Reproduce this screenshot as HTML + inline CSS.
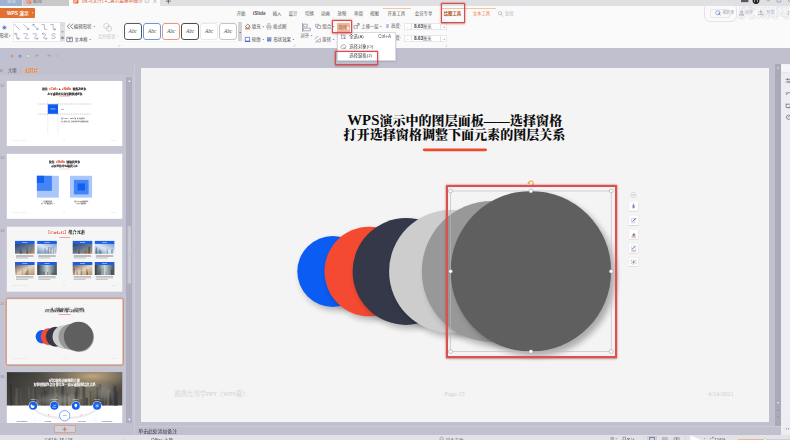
<!DOCTYPE html>
<html lang="zh-CN">
<head>
<meta charset="utf-8">
<title>WPS演示 - 选择窗格</title>
<style>
*{box-sizing:border-box;margin:0;padding:0}
html,body{width:790px;height:440px;overflow:hidden}
body{position:relative;filter:blur(0.3px);background:#c0c0cf;font-family:"Liberation Sans","Noto Sans CJK SC",sans-serif;color:#444;font-size:4.5px;line-height:1}
.abs{position:absolute}
.t{position:absolute;white-space:nowrap;line-height:1}
.serif{font-family:"Liberation Serif","Noto Serif CJK SC",serif}
/* top tab bar */
#tabbar{left:0;top:0;width:790px;height:5.7px;background:#e0e0e2}
#tab-home{left:0;top:0;width:21.5px;height:5.7px;background:#9fb2d0}
#tab-dk{left:23px;top:0;width:45.5px;height:5.7px;background:#c9c9cb}
#tab-act{left:69px;top:0;width:91px;height:5.7px;background:#fafafa}
/* ribbon */
#ribbon{left:0;top:5.7px;width:790px;height:42.6px;background:#fafafa}
#wpsbtn{left:0;top:7.6px;width:35px;height:10.6px;background:#e0712e;border-radius:0 1px 1px 0}
.menu{top:11.6px;font-size:4.4px;color:#4a4a4a}
.rb{font-size:4.4px;color:#3c3c3c}
.gal{background:#fff;border:0.5px solid #ebebee}
.sty{position:absolute;top:23.4px;width:17.6px;height:16.4px;border-radius:3px;background:#fff;border:0.8px solid #555}
.sty span{position:absolute;left:0;right:0;top:5px;text-align:center;font-family:"Liberation Serif",serif;font-style:italic;font-size:5.4px;color:#555}
.inp{position:absolute;left:403.5px;width:43.5px;height:7px;background:#fff;border:0.5px solid #e8e8ec}
/* panels */
#qat{left:0;top:48.3px;width:790px;height:15px}
#lpanel{left:0;top:75.4px;width:134.2px;height:347.6px;background:#c4c4d3}
.thumb{position:absolute;left:7px;width:115.4px;height:64.8px;background:#fff;overflow:hidden}
.num{position:absolute;left:0;font-size:4px;color:#8a8a98}
#vscroll{left:126.3px;top:76.8px;width:6.2px;height:346.2px;background:#aeaebf}
#slide{left:141px;top:68px;width:628px;height:353.5px;background:#f4f4f4}
#rscroll{left:775.2px;top:64px;width:6px;height:361.6px;background:#a9a9ba}
#rside{left:781.3px;top:64px;width:8.7px;height:371px;background:#eeeef2}
#status{left:0;top:435px;width:790px;height:5px;background:#e3e3e7}
.redbox{position:absolute;border:1.7px solid #dc4a4a;border-radius:.5px;box-shadow:0 0 1.2px rgba(200,50,50,.9),0 .6px 2.2px rgba(130,20,20,.4),inset 0 0 .8px rgba(200,50,50,.7)}
</style>
</head>
<body>
<!-- ===== window tab bar ===== -->
<div id="tabbar" class="abs"></div>
<div id="tab-home" class="abs"><span class="t" style="left:7px;top:-1.2px;font-size:4.4px;color:#e8eef8">首页</span></div>
<div id="tab-dk" class="abs"><span class="t" style="left:10px;top:-1.2px;font-size:4.4px;color:#555">稻壳</span></div>
<div id="tab-act" class="abs"><span class="t" style="left:13px;top:-1.5px;font-size:4.7px;color:#d9552b">[练习文件] 2_演示篇基本操作</span></div>
<!-- ===== ribbon ===== -->
<div id="ribbon" class="abs"></div>
<div id="wpsbtn" class="abs"><span class="t" style="left:7px;top:4.3px;font-size:4.8px;font-weight:bold;color:#fff">WPS 演示</span></div>
<span class="t" style="left:236.7px;top:12.20px;font-size:4.4px;color:#555;">开始</span>
<span class="t" style="left:252.8px;top:12.20px;font-size:4.4px;color:#555;"><b style="font-size:4.8px">iSlide</b></span>
<span class="t" style="left:272.7px;top:12.20px;font-size:4.4px;color:#555;">插入</span>
<span class="t" style="left:288.6px;top:12.20px;font-size:4.4px;color:#555;">设计</span>
<span class="t" style="left:305px;top:12.20px;font-size:4.4px;color:#555;">切换</span>
<span class="t" style="left:321px;top:12.20px;font-size:4.4px;color:#555;">动画</span>
<span class="t" style="left:337.5px;top:12.20px;font-size:4.4px;color:#555;">放映</span>
<span class="t" style="left:354px;top:12.20px;font-size:4.4px;color:#555;">审阅</span>
<span class="t" style="left:370px;top:12.20px;font-size:4.4px;color:#555;">视图</span>
<span class="t" style="left:387.6px;top:12.20px;font-size:4.4px;color:#555;">开发工具</span>
<span class="t" style="left:414.8px;top:12.20px;font-size:4.4px;color:#555;">会员专享</span>
<span class="t" style="left:443.7px;top:12.20px;font-size:4.4px;color:#b4561f;font-weight:bold;">绘图工具</span>
<span class="t" style="left:472.7px;top:12.20px;font-size:4.4px;color:#e58148;">文本工具</span>
<span class="t" style="left:504.8px;top:12.20px;font-size:4.4px;color:#b9b9bd;">查找</span>
<div class="abs" style="left:382.6px;top:8.4px;width:28.4px;height:0.7px;background:#f3c3a4"></div>
<div class="abs" style="left:440.5px;top:8.4px;width:55px;height:0.7px;background:#f3c3a4"></div>
<span class="t" style="left:722.2px;top:11.35px;font-size:4.1px;color:#8087a0;">未同步</span>
<span class="t" style="left:745px;top:11.35px;font-size:4.1px;color:#8087a0;">协作</span>
<span class="t" style="left:766.6px;top:11.35px;font-size:4.1px;color:#8087a0;">分享</span>
<span class="t" style="left:737.6px;top:2.2px;font-size:18.6px;color:transparent;-webkit-text-stroke:0.6px #e1e1e7;letter-spacing:-.9px;font-weight:bold">虎课网</span>
<div class="abs" style="left:704px;top:4.4px;width:32.5px;height:17.6px;border:0.9px solid #e3e3e9;border-radius:4px 4px 6px 6px"></div>
<div class="abs" style="left:710px;top:9px;width:20px;height:8.5px;border:0.8px solid #e6e6eb;border-radius:2px"></div>
<span class="t" style="left:-0.4px;top:34.40px;font-size:4.4px;color:#444;">形状</span>
<div class="abs gal" style="left:12.5px;top:22px;width:52.5px;height:19.5px"></div>
<div class="abs" style="left:60.3px;top:22.3px;width:4.4px;height:18.9px;background:#dedee1"></div>
<span class="t" style="left:73.8px;top:24.97px;font-size:4.45px;color:#4c4c4c;">编辑形状</span>
<span class="t" style="left:74.5px;top:37.77px;font-size:4.45px;color:#4c4c4c;">文本框</span>
<span class="t" style="left:98px;top:34.55px;font-size:4.3px;color:#c2c2c6;">合并形状</span>
<div class="abs gal" style="left:122px;top:22px;width:120.3px;height:20px;border-color:#f3f3f5"></div>
<div class="sty" style="left:124px;border-color:#5a5a5a;border-width:0.8px"><span>Abc</span></div>
<div class="sty" style="left:143.3px;border-color:#6b9bd6;border-width:0.8px"><span>Abc</span></div>
<div class="sty" style="left:162.4px;border-color:#e8967c;border-width:0.8px"><span>Abc</span></div>
<div class="sty" style="left:181.3px;border-color:#4e4e4e;border-width:1px"><span>Abc</span></div>
<div class="sty" style="left:200.3px;border-color:#e9e9e9;border-width:0.8px"><span>Abc</span></div>
<div class="sty" style="left:219.3px;border-color:#c4c4c4;border-width:0.8px"><span>Abc</span></div>
<div class="abs" style="left:238.2px;top:22.3px;width:3.8px;height:18.6px;background:#d2d2d6"></div>
<span class="t" style="left:251.8px;top:25.17px;font-size:4.45px;color:#4c4c4c;">填充</span>
<span class="t" style="left:273.1px;top:25.17px;font-size:4.45px;color:#4c4c4c;">格式刷</span>
<span class="t" style="left:251.8px;top:37.77px;font-size:4.45px;color:#4c4c4c;">轮廓</span>
<span class="t" style="left:273.4px;top:37.80px;font-size:4.4px;color:#4c4c4c;">形状效果</span>
<span class="t" style="left:300.5px;top:34.45px;font-size:4.3px;color:#4c4c4c;">对齐</span>
<span class="t" style="left:322.3px;top:25.00px;font-size:4.4px;color:#4c4c4c;">组合</span>
<span class="t" style="left:322.3px;top:37.80px;font-size:4.4px;color:#4c4c4c;">旋转</span>
<div class="abs" style="left:337px;top:22.8px;width:13.4px;height:8.9px;background:#f1b497;border-radius:0.6px"></div>
<span class="t" style="left:338.6px;top:25.65px;font-size:4.1px;color:#8a5a48;">选择</span>
<span class="t" style="left:361.3px;top:25.02px;font-size:4.35px;color:#4c4c4c;">上移一层</span>
<span class="t" style="left:361.3px;top:37.62px;font-size:4.35px;color:#4c4c4c;">下移一层</span>
<span class="t" style="left:391px;top:24.20px;font-size:4.4px;color:#4c4c4c;">高度:</span>
<span class="t" style="left:391px;top:36.20px;font-size:4.4px;color:#4c4c4c;">宽度:</span>
<div class="inp" style="top:22.8px"><span class="t" style="left:2.4px;top:1.1px;font-size:4px;color:#777">-</span><span class="t" style="left:9.4px;top:1.2px;font-size:4.2px;color:#444;font-weight:bold"><span style="font-size:4.7px">8.63</span><span style="font-weight:normal;color:#666">厘米</span></span><span class="t" style="left:38.6px;top:1.3px;font-size:4px;color:#777">+</span><i class="abs" style="left:6.4px;top:0;width:0.4px;height:6px;background:#e2e2e6"></i><i class="abs" style="left:35.6px;top:0;width:0.4px;height:6px;background:#e2e2e6"></i></div>
<div class="inp" style="top:34.6px"><span class="t" style="left:2.4px;top:1.1px;font-size:4px;color:#777">-</span><span class="t" style="left:9.4px;top:1.2px;font-size:4.2px;color:#444;font-weight:bold"><span style="font-size:4.7px">8.63</span><span style="font-weight:normal;color:#666">厘米</span></span><span class="t" style="left:38.6px;top:1.3px;font-size:4px;color:#777">+</span><i class="abs" style="left:6.4px;top:0;width:0.4px;height:6px;background:#e2e2e6"></i><i class="abs" style="left:35.6px;top:0;width:0.4px;height:6px;background:#e2e2e6"></i></div>
<svg class="abs" style="left:0;top:0" width="790" height="66" viewBox="0 0 790 66" fill="none" stroke-linecap="round" stroke-linejoin="round">
<g transform="translate(0,-1.5)"><rect x="26.8" y="0.6" width="4.4" height="4.4" rx="1" fill="#e8552b"/><path d="M28.2 1.6h1.4a1 1 0 0 1 0 2h-1.4zM28.2 3.6v.8" stroke="#fff" stroke-width=".6"/>
<rect x="73.3" y="0.3" width="5.2" height="4.8" rx=".8" fill="#ee6b33"/><path d="M74.8 4v-2.4h1.4a.8.8 0 0 1 0 1.6h-1.4" stroke="#fff" stroke-width=".6"/>
<path d="M145.5 1.2h3.4v2.6h-1.6l-.9.9v-.9h-.9z" stroke="#9aa0b4" stroke-width=".5"/><path d="M153.4 1.2l3 3.2M156.4 1.2l-3 3.2" stroke="#8a8f9f" stroke-width=".5"/>
<path d="M166.4 2.6h4M168.4 .6v4" stroke="#555" stroke-width=".8"/>
</g>
<rect x="741" y="0" width="7.4" height="2.2" fill="#5a5a5e"/><circle cx="756" cy=".6" r="3.4" fill="#1e1e1e"/><path d="M754.6 .2v1.6M757.4 .2v1.6" stroke="#ddd" stroke-width=".7"/>
<path d="M767 .8h2.6" stroke="#8a8aa0" stroke-width=".6"/><rect x="777.4" y="-1" width="3.4" height="3" stroke="#7a8ac0" stroke-width=".6"/><path d="M788 0l2 2" stroke="#777" stroke-width=".6"/>
<circle cx="717.8" cy="12.8" r="2.1" stroke="#6a7fc8" stroke-width=".6"/><path d="M718.6 13.6l1.6 1.4" stroke="#5a6fb8" stroke-width=".8"/>
<circle cx="741.6" cy="11.8" r="1" stroke="#7a80a0" stroke-width=".5"/><path d="M739.4 14.8c.2-1.6 4.2-1.6 4.4 0z" stroke="#7a80a0" stroke-width=".5"/>
<path d="M758.4 14.6h5M760.9 11v2.4M759.4 12.2l1.5-1.5 1.5 1.5" stroke="#7a80a0" stroke-width=".5"/>
<path d="M788.6 11.4v.1M788.6 13v.1M788.6 14.6v.1" stroke="#888" stroke-width=".7"/>
<circle cx="500" cy="13.2" r="1.7" stroke="#aaa" stroke-width=".6"/><path d="M501.3 14.6l1.5 1.6" stroke="#aaa" stroke-width=".7"/>
<circle cx="4.4" cy="27.5" r="1.5" fill="#5b78c6"/><circle cx="4.4" cy="27.5" r="2.2" stroke="#9fb0de" stroke-width=".4"/>
<g stroke="#5b6a94" stroke-width=".45"><path d="M14.4 24.4l5 5"/><path d="M23.6 24.4l5 5M28.6 28v1.4h-1.4"/><path d="M33 24.4l5 5M38 28v1.4h-1.4M33 25.8v-1.4h1.4"/><path d="M41.8 24.6h2.6v4.8h2.6"/><path d="M50.6 24.6h2.6v4.8h2.4M54.6 28.4l1 1-1 1"/><path d="M14.6 33.8h2.2v4.8h2.4M18.2 37.6l1 1-1 1M15.6 32.8l-1 1 1 1"/><path d="M23.6 33.8h3.2c1 0 1 .8 .2 1.6l-1.6 1.8c-.6.8-.4 1.4.6 1.4h2.6"/><path d="M33 33.8h3c1 0 1 .8 .2 1.6l-1.4 1.8c-.6.8-.4 1.4.6 1.4h2.2M37 37.6l1 1-1 1"/><path d="M42.4 33.8h2.6c1 0 1 .8 .2 1.6l-1.4 1.8c-.6.8-.4 1.4.6 1.4h2.2M46 37.6l1 1-1 1M43.2 32.8l-1 1 1 1"/><path d="M55.4 34c-1.6-.6-3.6-.2-3.600 1 0 1.400 3.600 .8 3.600 2.400 0 1.200-2.200 1.600-3.800 .8"/></g>
<path d="M61.7 25.600l.8-.8.8.8z" fill="#bbb"/><path d="M61.500 31.400l1 1 1-1z" fill="#555"/><path d="M61.500 38l1 1 1-1zM61.500 37h2" fill="#555" stroke="#555" stroke-width=".4"/><path d="M60.3 28.5h4.400M60.3 35h4.400" stroke="#eee" stroke-width=".4"/>
<path d="M69.600 24l-2.400 2.400 2.400 2.400M72.800 24l-2.400 2.400 2.400 2.400" stroke="#44506e" stroke-width=".7"/>
<rect x="67.200" y="37.300" width="5.200" height="4.400" stroke="#44506e" stroke-width=".6"/><path d="M68.600 38.500h2.400M69.800 38.500v2.200" stroke="#44506e" stroke-width=".6"/>
<circle cx="106.400" cy="26" r="2.700" stroke="#bdbdc0" stroke-width=".6"/><circle cx="109" cy="28.600" r="2.700" stroke="#bdbdc0" stroke-width=".6"/>
<path d="M118.2 46.4h1.600v-1.600" stroke="#bbb" stroke-width=".4"/><path d="M293.2 46.4h1.600v-1.600" stroke="#bbb" stroke-width=".4"/><path d="M445.2 46.4h1.600v-1.600" stroke="#bbb" stroke-width=".4"/>
<path d="M245.600 26.400l2.200-2.400 2.200 2.200-2.400 1.800z" stroke="#444" stroke-width=".6"/><path d="M249.800 26.600c.5.700.5 1.200 0 1.400" stroke="#444" stroke-width=".5"/><path d="M245.400 28.800h4.200" stroke="#e2402c" stroke-width=".9"/>
<path d="M268.200 23.600h1.800v2.400h-1.800zM267 26h4.200v1.400h-4.200zM267.400 27.400v1.800h3.400v-1.800" stroke="#8a8d98" stroke-width=".5"/>
<rect x="245.600" y="37.400" width="4" height="3.800" fill="#fff" stroke="#3b62c4" stroke-width=".7"/><path d="M245.300 41.400h4.600" stroke="#2f55b8" stroke-width=".9"/>
<rect x="267" y="37.300" width="4.300" height="4.200" fill="#6d86c6" stroke="none"/><rect x="267" y="37.300" width="4.300" height="2" fill="#8fa3d6" stroke="none"/>
<path d="M302.500 23.400v8" stroke="#6a7088" stroke-width=".6"/><rect x="303.600" y="24.200" width="3.600" height="2.600" stroke="#6a7088" stroke-width=".55"/><rect x="303.600" y="28.200" width="6.800" height="2.600" stroke="#6a7088" stroke-width=".55"/>
<rect x="316" y="24.300" width="3" height="2.800" stroke="#6a7088" stroke-width=".5"/><rect x="317.600" y="25.700" width="3" height="2.800" fill="#fafafa" stroke="#6a7088" stroke-width=".5"/>
<path d="M316 41.600l4.400-3.200v3.200z" stroke="#6a7088" stroke-width=".5"/><path d="M315.400 39c0-1.600 1.200-2.400 2.600-2.400" stroke="#6a7088" stroke-width=".5"/>
<rect x="354.400" y="25.400" width="3.200" height="3" stroke="#6a7088" stroke-width=".5"/><path d="M356.400 26.400l2.600-2.600M357.400 23.700h1.700v1.700" stroke="#44506e" stroke-width=".55"/>
<rect x="386.200" y="24" width="2.600" height="4" fill="#a9c0ea" stroke="none"/><rect x="386.200" y="36" width="2.600" height="4" fill="#a9c0ea" stroke="none"/>
<path d="M31.70 12.55h1.800l-.9 1z" fill="#fff" stroke="none"/><path d="M8.80 35.55h1.800l-.9 1z" fill="#555" stroke="none"/><path d="M93.40 26.25h1.800l-.9 1z" fill="#666" stroke="none"/><path d="M89.30 39.15h1.800l-.9 1z" fill="#666" stroke="none"/><path d="M116.50 35.65h1.800l-.9 1z" fill="#ccc" stroke="none"/><path d="M239.20 31.95h1.800l-.9 1z" fill="#444" stroke="none"/><path d="M262.40 26.45h1.800l-.9 1z" fill="#666" stroke="none"/><path d="M262.40 39.05h1.800l-.9 1z" fill="#666" stroke="none"/><path d="M292.50 39.05h1.800l-.9 1z" fill="#666" stroke="none"/><path d="M310.70 35.35h1.800l-.9 1z" fill="#666" stroke="none"/><path d="M332.70 26.25h1.800l-.9 1z" fill="#666" stroke="none"/><path d="M332.70 39.05h1.800l-.9 1z" fill="#666" stroke="none"/><path d="M379.90 26.25h1.800l-.9 1z" fill="#666" stroke="none"/><path d="M379.90 39.05h1.800l-.9 1z" fill="#666" stroke="none"/>
</svg>


<!-- ===== quick access + outline tabs ===== -->
<svg class="abs" style="left:0;top:48px" width="140" height="30" viewBox="0 48 140 30" fill="none" stroke-linecap="round">
<rect x="1" y="54.600" width="3.400" height="3" rx=".5" fill="#aac3ea"/><circle cx="11.800" cy="56" r="1.500" fill="#b9a2ac"/><circle cx="11.800" cy="56" r=".5" fill="#d77"/><circle cx="20" cy="56.100" r="1.700" fill="#8c90dc"/><rect x="27.200" y="54.400" width="2.600" height="3.400" fill="#e8efe4" stroke="#7fae8e" stroke-width=".4"/><path d="M36.200 56.800v-1.400h2M36.200 55.400l.8-.8" stroke="#8a8a9a" stroke-width=".5"/><path d="M49.800 56.800v-1.400h-2M49.800 55.400l-.8-.8" stroke="#8a8a9a" stroke-width=".5"/><path d="M56.600 55.800h1.400l-.7.800z" fill="#777"/><path d="M0 69.200l2.600 2.800M2.600 69.200l-2.600 2.800" stroke="#777" stroke-width=".5"/><path d="M20.500 67v6.200" stroke="#a9a9b8" stroke-width=".4"/><path d="M22 74.900h18" stroke="#eab892" stroke-width=".6"/></svg>
<span class="t" style="left:8px;top:68.75px;font-size:4.3px;color:#555;">大纲</span>
<span class="t" style="left:25px;top:68.63px;font-size:4.35px;color:#e2722a;font-weight:bold;text-shadow:0 0 1px #ffe3cc;">幻灯片</span>

<!-- ===== left thumbnail panel ===== -->
<div id="lpanel" class="abs"></div>
<svg class="abs" style="left:0;top:76px" width="132" height="347" viewBox="0 76 132 347">
<defs>
<filter id="tsh" x="-30%" y="-30%" width="160%" height="160%"><feGaussianBlur stdDeviation="0.6"/></filter>
<filter id="tbl" x="-50%" y="-50%" width="200%" height="200%"><feGaussianBlur stdDeviation="2.5"/></filter>
<linearGradient id="gA" x1="0" y1="0" x2="1" y2="1"><stop offset="0" stop-color="#2c4468"/><stop offset=".55" stop-color="#6d7f96"/><stop offset="1" stop-color="#c98a55"/></linearGradient>
<linearGradient id="gB" x1="0" y1="1" x2="1" y2="0"><stop offset="0" stop-color="#5d86b8"/><stop offset=".5" stop-color="#dfe9f4"/><stop offset="1" stop-color="#7ba0cc"/></linearGradient>
<linearGradient id="gC" x1="0" y1="0" x2="1" y2="1"><stop offset="0" stop-color="#6b5a50"/><stop offset=".5" stop-color="#e6d3bd"/><stop offset="1" stop-color="#b98d68"/></linearGradient>
<linearGradient id="gD" x1="0" y1="0" x2="1" y2="0"><stop offset="0" stop-color="#2d3a40"/><stop offset=".5" stop-color="#c9d2d4"/><stop offset="1" stop-color="#3d4c52"/></linearGradient>
<linearGradient id="gCity" x1="0" y1="0" x2="1" y2=".25"><stop offset="0" stop-color="#34332f"/><stop offset=".45" stop-color="#55524c"/><stop offset=".8" stop-color="#77705f"/><stop offset="1" stop-color="#4d4a44"/></linearGradient>
<radialGradient id="gSun" cx=".74" cy=".12" r=".5"><stop offset="0" stop-color="#c4a77c" stop-opacity=".98"/><stop offset="1" stop-color="#6b6660" stop-opacity="0"/></radialGradient>
</defs>
<rect x="6.8" y="81" width="115.5" height="65" fill="#fff"/>
<rect x="6.8" y="153.8" width="115.5" height="65" fill="#fff"/>
<rect x="6.8" y="226.7" width="115.5" height="65" fill="#f6f6f6"/>
<rect x="6.8" y="299.2" width="115.5" height="65" fill="#f6f6f6"/>
<rect x="6.8" y="372.1" width="115.5" height="65" fill="#fff"/>
<text x="0" y="86.6" font-size="4" fill="#8d8d9c" font-family="'Liberation Sans',sans-serif">12</text>
<text x="0" y="159.4" font-size="4" fill="#8d8d9c" font-family="'Liberation Sans',sans-serif">13</text>
<text x="0" y="232.29999999999998" font-size="4" fill="#8d8d9c" font-family="'Liberation Sans',sans-serif">14</text>
<text x="0" y="304.8" font-size="4" fill="#e07a45" font-family="'Liberation Sans',sans-serif">15</text>
<text x="0" y="377.70000000000005" font-size="4" fill="#8d8d9c" font-family="'Liberation Sans',sans-serif">16</text>
<g font-family="'Liberation Serif','Noto Serif CJK SC',serif" font-weight="900" font-size="2.72" text-anchor="middle" fill="#151515" stroke="#151515" stroke-width=".1"><text x="64.3" y="89.95">按住<tspan fill="#e0452c" stroke="#e0452c">【<tspan font-size="3.2">Ctrl</tspan>】</tspan><tspan font-size="3.2">+</tspan><tspan fill="#e0452c" stroke="#e0452c">【<tspan font-size="3.2">Shift</tspan>】</tspan>键拖动对象</text><text x="64.9" y="94.65">水平或垂直方向复制快速对象</text></g>
<rect x="59.400" y="95.700" width="10.600" height=".55" rx=".27" fill="#ee4a2e"/>
<path d="M38 104h53.300M38 114.100h53.300" stroke="#8a8a8a" stroke-width=".5" stroke-dasharray="1.200 1"/>
<path d="M47.800 100.800v33M58 100.800v33" stroke="#a9b3c8" stroke-width=".45" stroke-dasharray="1 1.500"/>
<path d="M53 117.500v3.500" stroke="#c9c9c9" stroke-width=".5" stroke-dasharray=".8 .5"/>
<rect x="47.800" y="104.300" width="10.200" height="9.500" fill="#0f5bf0"/>
<rect x="50.400" y="108.600" width="5" height=".7" fill="#dfe8ff" opacity=".85"/>
<rect x="61" y="109.100" width="2.800" height=".45" fill="#666"/>
<g font-family="'Liberation Serif','Noto Serif CJK SC',serif" font-size="1.3" font-weight="700" fill="#222"><text x="61" y="118.950">按住【Ctrl】+【Shift】键，拖动复制对象</text><text x="61" y="121.850">水平或垂直方向，保持与原对象对齐的快速复制</text></g>
<g font-family="'Liberation Serif','Noto Serif CJK SC',serif" font-size="1.25" fill="#c9c9c9"><text x="13.0" y="140.6">跟我比邻学PPT（WPS篇）</text><text x="62.8" y="140.6">Page</text><text x="111.2" y="140.6">4/14/2021</text></g>
<g font-family="'Liberation Serif','Noto Serif CJK SC',serif" font-weight="900" font-size="2.72" text-anchor="middle" fill="#151515" stroke="#151515" stroke-width=".1"><text x="64.600" y="162.54999999999998">按住<tspan fill="#e0452c" stroke="#e0452c">【<tspan font-size="3.2">Shift</tspan>】</tspan>键缩放对象</text><text x="64.500" y="166.95">可以对象中心缩放大小</text></g>
<rect x="59.400" y="168.800" width="10.600" height=".5" rx=".25" fill="#f4b4a6"/>
<rect x="36.900" y="175.800" width="21.900" height="21.800" fill="#a9c7fb"/><rect x="36.900" y="175.800" width="15" height="15.100" fill="#4584f6"/><rect x="36.900" y="175.800" width="7.100" height="7.100" fill="#1160f2"/>
<rect x="70" y="175.800" width="22.100" height="21.800" fill="#a9c7fb"/><rect x="73.900" y="179.900" width="14.700" height="14.500" fill="#4584f6"/><rect x="77.600" y="183.400" width="7.400" height="7.100" fill="#1160f2"/>
<g font-family="'Liberation Serif','Noto Serif CJK SC',serif" font-size="1.25" font-weight="700" fill="#222" text-anchor="middle"><text x="48" y="201.600">按住键缩放对象</text><text x="48" y="203.700">以左上角为基准缩放大小</text><text x="81.300" y="201.600">按住Ctrl+Shift键缩放对象</text><text x="81.300" y="203.700">以中心为基准缩放</text></g>
<g font-family="'Liberation Serif','Noto Serif CJK SC',serif" font-size="1.25" fill="#c9c9c9"><text x="13.0" y="213.4">跟我比邻学PPT（WPS篇）</text><text x="62.8" y="213.4">Page</text><text x="111.2" y="213.4">4/14/2021</text></g>
<text x="65.500" y="234.250" font-family="'Liberation Serif','Noto Serif CJK SC',serif" font-weight="900" font-size="4.15" text-anchor="middle" fill="#151515"><tspan fill="#e0452c">【<tspan font-size="4.5">Ctrl+G</tspan>】</tspan>组合元素</text>
<rect x="59.400" y="236.950" width="10.600" height=".55" rx=".27" fill="#ee4a2e"/>
<rect x="15" y="240.9" width="19.600" height="3.100" fill="#1b5fe8"/><rect x="22.3" y="242.1" width="5" height=".6" fill="#e8efff" opacity=".9"/><rect x="15" y="243.9" width="19.600" height="9.8" fill="url(#gA)"/><rect x="19.7" y="249.0" width="1.0" height="4.7" fill="#1d2a3a" opacity="0.30"/><rect x="26.5" y="251.4" width="0.6" height="2.3" fill="#1d2a3a" opacity="0.36"/><rect x="20.0" y="250.5" width="1.6" height="3.2" fill="#1d2a3a" opacity="0.27"/><rect x="30.1" y="249.3" width="1.2" height="4.4" fill="#1d2a3a" opacity="0.19"/><rect x="26.6" y="247.4" width="1.1" height="6.3" fill="#1d2a3a" opacity="0.34"/><rect x="27.2" y="251.4" width="1.4" height="2.3" fill="#1d2a3a" opacity="0.30"/><rect x="20.8" y="251.5" width="1.5" height="2.2" fill="#1d2a3a" opacity="0.27"/><rect x="16" y="255.20" width="17.3" height=".5" fill="#6a6a6a" opacity=".8"/><rect x="16" y="256.45" width="17.6" height=".5" fill="#6a6a6a" opacity=".8"/><rect x="16" y="257.70" width="12" height=".5" fill="#6a6a6a" opacity=".8"/>
<rect x="37.2" y="240.9" width="19.600" height="3.100" fill="#1b5fe8"/><rect x="44.5" y="242.1" width="5" height=".6" fill="#e8efff" opacity=".9"/><rect x="37.2" y="243.9" width="19.600" height="9.8" fill="url(#gB)"/><rect x="50.3" y="247.3" width="1.3" height="6.4" fill="#1d2a3a" opacity="0.38"/><rect x="44.6" y="247.7" width="1.0" height="6.0" fill="#1d2a3a" opacity="0.38"/><rect x="53.1" y="251.2" width="0.7" height="2.5" fill="#1d2a3a" opacity="0.20"/><rect x="54.6" y="249.5" width="1.2" height="4.2" fill="#1d2a3a" opacity="0.23"/><rect x="46.6" y="249.8" width="1.0" height="3.9" fill="#1d2a3a" opacity="0.30"/><rect x="47.9" y="247.2" width="1.3" height="6.5" fill="#1d2a3a" opacity="0.38"/><rect x="52.7" y="246.7" width="1.3" height="7.0" fill="#1d2a3a" opacity="0.19"/><rect x="38.2" y="255.20" width="17.3" height=".5" fill="#6a6a6a" opacity=".8"/><rect x="38.2" y="256.45" width="17.6" height=".5" fill="#6a6a6a" opacity=".8"/><rect x="38.2" y="257.70" width="12" height=".5" fill="#6a6a6a" opacity=".8"/>
<rect x="72.7" y="240.9" width="19.600" height="3.100" fill="#1b5fe8"/><rect x="80.0" y="242.1" width="5" height=".6" fill="#e8efff" opacity=".9"/><rect x="72.7" y="243.9" width="19.600" height="9.8" fill="url(#gA)"/><rect x="88.3" y="246.9" width="1.5" height="6.8" fill="#1d2a3a" opacity="0.29"/><rect x="85.7" y="250.6" width="1.4" height="3.1" fill="#1d2a3a" opacity="0.29"/><rect x="78.2" y="251.4" width="1.5" height="2.3" fill="#1d2a3a" opacity="0.40"/><rect x="74.7" y="247.7" width="1.0" height="6.0" fill="#1d2a3a" opacity="0.19"/><rect x="78.3" y="247.9" width="1.5" height="5.8" fill="#1d2a3a" opacity="0.16"/><rect x="84.0" y="251.5" width="1.3" height="2.2" fill="#1d2a3a" opacity="0.23"/><rect x="88.6" y="246.8" width="1.1" height="6.9" fill="#1d2a3a" opacity="0.40"/><rect x="73.7" y="255.20" width="17.3" height=".5" fill="#6a6a6a" opacity=".8"/><rect x="73.7" y="256.45" width="17.6" height=".5" fill="#6a6a6a" opacity=".8"/><rect x="73.7" y="257.70" width="12" height=".5" fill="#6a6a6a" opacity=".8"/>
<rect x="94.8" y="240.9" width="19.600" height="3.100" fill="#1b5fe8"/><rect x="102.1" y="242.1" width="5" height=".6" fill="#e8efff" opacity=".9"/><rect x="94.8" y="243.9" width="19.600" height="9.8" fill="url(#gB)"/><rect x="100.7" y="251.3" width="1.2" height="2.4" fill="#1d2a3a" opacity="0.16"/><rect x="98.8" y="249.7" width="1.2" height="4.0" fill="#1d2a3a" opacity="0.19"/><rect x="96.0" y="247.4" width="0.9" height="6.3" fill="#1d2a3a" opacity="0.39"/><rect x="111.0" y="249.8" width="1.1" height="3.9" fill="#1d2a3a" opacity="0.28"/><rect x="106.6" y="248.7" width="1.2" height="5.0" fill="#1d2a3a" opacity="0.31"/><rect x="111.8" y="249.2" width="1.0" height="4.5" fill="#1d2a3a" opacity="0.33"/><rect x="99.5" y="250.2" width="1.6" height="3.5" fill="#1d2a3a" opacity="0.28"/><rect x="95.8" y="255.20" width="17.3" height=".5" fill="#6a6a6a" opacity=".8"/><rect x="95.8" y="256.45" width="17.6" height=".5" fill="#6a6a6a" opacity=".8"/><rect x="95.8" y="257.70" width="12" height=".5" fill="#6a6a6a" opacity=".8"/>
<rect x="15" y="262" width="19.600" height="3.100" fill="#1b5fe8"/><rect x="22.3" y="263.2" width="5" height=".6" fill="#e8efff" opacity=".9"/><rect x="15" y="265" width="19.600" height="10.0" fill="url(#gC)"/><rect x="25.1" y="272.9" width="1.0" height="2.1" fill="#1d2a3a" opacity="0.29"/><rect x="15.9" y="269.9" width="1.2" height="5.1" fill="#1d2a3a" opacity="0.17"/><rect x="26.5" y="270.7" width="1.3" height="4.3" fill="#1d2a3a" opacity="0.24"/><rect x="27.9" y="269.3" width="0.6" height="5.7" fill="#1d2a3a" opacity="0.17"/><rect x="27.3" y="268.2" width="0.9" height="6.8" fill="#1d2a3a" opacity="0.26"/><rect x="25.9" y="271.4" width="1.0" height="3.6" fill="#1d2a3a" opacity="0.23"/><rect x="22.0" y="270.0" width="0.9" height="5.0" fill="#1d2a3a" opacity="0.24"/><rect x="16" y="276.40" width="17.3" height=".5" fill="#6a6a6a" opacity=".8"/><rect x="16" y="277.65" width="17.6" height=".5" fill="#6a6a6a" opacity=".8"/><rect x="16" y="278.90" width="12" height=".5" fill="#6a6a6a" opacity=".8"/>
<rect x="37.2" y="262" width="19.600" height="3.100" fill="#1b5fe8"/><rect x="44.5" y="263.2" width="5" height=".6" fill="#e8efff" opacity=".9"/><rect x="37.2" y="265" width="19.600" height="10.0" fill="url(#gD)"/><rect x="51.2" y="272.9" width="1.2" height="2.1" fill="#1d2a3a" opacity="0.33"/><rect x="43.1" y="271.9" width="1.4" height="3.1" fill="#1d2a3a" opacity="0.21"/><rect x="41.0" y="270.8" width="1.3" height="4.2" fill="#1d2a3a" opacity="0.18"/><rect x="43.3" y="271.3" width="1.4" height="3.7" fill="#1d2a3a" opacity="0.26"/><rect x="52.7" y="272.2" width="0.9" height="2.8" fill="#1d2a3a" opacity="0.31"/><rect x="53.2" y="270.7" width="0.8" height="4.3" fill="#1d2a3a" opacity="0.18"/><rect x="47.0" y="272.0" width="1.4" height="3.0" fill="#1d2a3a" opacity="0.36"/><rect x="38.2" y="276.40" width="17.3" height=".5" fill="#6a6a6a" opacity=".8"/><rect x="38.2" y="277.65" width="17.6" height=".5" fill="#6a6a6a" opacity=".8"/><rect x="38.2" y="278.90" width="12" height=".5" fill="#6a6a6a" opacity=".8"/>
<rect x="72.7" y="262" width="19.600" height="3.100" fill="#1b5fe8"/><rect x="80.0" y="263.2" width="5" height=".6" fill="#e8efff" opacity=".9"/><rect x="72.7" y="265" width="19.600" height="10.0" fill="url(#gC)"/><rect x="76.4" y="271.6" width="1.4" height="3.4" fill="#1d2a3a" opacity="0.31"/><rect x="87.3" y="271.3" width="0.7" height="3.7" fill="#1d2a3a" opacity="0.22"/><rect x="87.1" y="271.6" width="0.9" height="3.4" fill="#1d2a3a" opacity="0.25"/><rect x="80.5" y="271.0" width="1.5" height="4.0" fill="#1d2a3a" opacity="0.19"/><rect x="73.3" y="268.3" width="1.5" height="6.7" fill="#1d2a3a" opacity="0.40"/><rect x="80.8" y="268.2" width="1.5" height="6.8" fill="#1d2a3a" opacity="0.21"/><rect x="86.2" y="268.8" width="1.3" height="6.2" fill="#1d2a3a" opacity="0.28"/><rect x="73.7" y="276.40" width="17.3" height=".5" fill="#6a6a6a" opacity=".8"/><rect x="73.7" y="277.65" width="17.6" height=".5" fill="#6a6a6a" opacity=".8"/><rect x="73.7" y="278.90" width="12" height=".5" fill="#6a6a6a" opacity=".8"/>
<rect x="94.8" y="262" width="19.600" height="3.100" fill="#1b5fe8"/><rect x="102.1" y="263.2" width="5" height=".6" fill="#e8efff" opacity=".9"/><rect x="94.8" y="265" width="19.600" height="10.0" fill="url(#gD)"/><rect x="100.4" y="271.3" width="0.8" height="3.7" fill="#1d2a3a" opacity="0.17"/><rect x="105.6" y="271.6" width="1.4" height="3.4" fill="#1d2a3a" opacity="0.16"/><rect x="111.1" y="269.5" width="1.5" height="5.5" fill="#1d2a3a" opacity="0.37"/><rect x="111.0" y="270.1" width="0.6" height="4.9" fill="#1d2a3a" opacity="0.34"/><rect x="98.3" y="271.5" width="1.3" height="3.5" fill="#1d2a3a" opacity="0.28"/><rect x="102.5" y="268.3" width="1.2" height="6.7" fill="#1d2a3a" opacity="0.24"/><rect x="99.7" y="268.7" width="1.1" height="6.3" fill="#1d2a3a" opacity="0.35"/><rect x="95.8" y="276.40" width="17.3" height=".5" fill="#6a6a6a" opacity=".8"/><rect x="95.8" y="277.65" width="17.6" height=".5" fill="#6a6a6a" opacity=".8"/><rect x="95.8" y="278.90" width="12" height=".5" fill="#6a6a6a" opacity=".8"/>
<g font-family="'Liberation Serif','Noto Serif CJK SC',serif" font-size="1.25" fill="#c9c9c9"><text x="13.0" y="286.3">跟我比邻学PPT（WPS篇）</text><text x="62.8" y="286.3">Page</text><text x="111.2" y="286.3">4/14/2021</text></g>
<rect x="6.150" y="298.150" width="117.200" height="67.100" rx="1.600" fill="none" stroke="#db8558" stroke-width=".9"/>
<g font-family="'Liberation Serif','Noto Serif CJK SC',serif" font-weight="900" font-size="2.36" text-anchor="middle" fill="#111"><text x="64.64" y="309.55">WPS演示中的图层面板——选择窗格</text><text x="64.64" y="312.37">打开选择窗格调整下面元素的图层关系</text></g>
<rect x="58.76" y="313.99" width="11.77" height=".55" rx=".27" fill="#ee4a2e"/>
<circle cx="42.82" cy="337.34" r="6.53" fill="#000" opacity=".25" filter="url(#tsh)"/><circle cx="42.17" cy="336.61" r="6.53" fill="#0a5cf2"/>
<circle cx="49.53" cy="337.34" r="8.24" fill="#000" opacity=".25" filter="url(#tsh)"/><circle cx="48.88" cy="336.61" r="8.24" fill="#f44a31"/>
<circle cx="56.28" cy="337.34" r="9.82" fill="#000" opacity=".25" filter="url(#tsh)"/><circle cx="55.63" cy="336.61" r="9.82" fill="#353849"/>
<circle cx="64.46" cy="337.34" r="11.29" fill="#000" opacity=".25" filter="url(#tsh)"/><circle cx="63.82" cy="336.61" r="11.29" fill="#cdcdcd"/>
<circle cx="72.15" cy="337.34" r="12.96" fill="#000" opacity=".25" filter="url(#tsh)"/><circle cx="71.5" cy="336.61" r="12.96" fill="#989898"/>
<circle cx="79.25" cy="337.34" r="14.77" fill="#000" opacity=".25" filter="url(#tsh)"/><circle cx="78.6" cy="336.61" r="14.77" fill="#5f5f5f"/>
<g font-family="'Liberation Serif','Noto Serif CJK SC',serif" font-size="1.25" fill="#cfcfcf"><text x="13.0" y="359.0">跟我比邻学PPT（WPS篇）</text><text x="62.8" y="359.0">Page 15</text><text x="111.2" y="359.0">4/14/2021</text></g>
<rect x="6.8" y="372.1" width="115.5" height="33.400" fill="url(#gCity)"/><rect x="6.8" y="372.1" width="115.5" height="33.400" fill="url(#gSun)"/>
<rect x="46.6" y="391.9" width="1.4" height="13.6" fill="#2b3036" opacity="0.31"/><rect x="96.3" y="387.0" width="2.7" height="18.5" fill="#2b3036" opacity="0.42"/><rect x="71.3" y="387.9" width="1.7" height="17.6" fill="#3a3f45" opacity="0.34"/><rect x="66.4" y="393.0" width="1.8" height="12.5" fill="#2b3036" opacity="0.55"/><rect x="94.4" y="400.6" width="1.1" height="4.9" fill="#7b7466" opacity="0.59"/><rect x="103.4" y="392.5" width="1.2" height="13.0" fill="#555a5e" opacity="0.30"/><rect x="14.9" y="394.5" width="1.7" height="11.0" fill="#555a5e" opacity="0.38"/><rect x="28.4" y="399.3" width="1.6" height="6.2" fill="#22272c" opacity="0.25"/><rect x="88.5" y="391.3" width="2.4" height="14.2" fill="#2b3036" opacity="0.38"/><rect x="75.1" y="394.7" width="2.4" height="10.8" fill="#2b3036" opacity="0.47"/><rect x="55.6" y="392.6" width="1.7" height="12.9" fill="#8e8a80" opacity="0.36"/><rect x="114.2" y="401.2" width="1.8" height="4.3" fill="#3a3f45" opacity="0.44"/><rect x="85.4" y="393.9" width="1.1" height="11.6" fill="#7b7466" opacity="0.30"/><rect x="10.0" y="384.1" width="1.6" height="21.4" fill="#22272c" opacity="0.53"/><rect x="36.4" y="399.3" width="1.8" height="6.2" fill="#8e8a80" opacity="0.48"/><rect x="107.1" y="389.5" width="2.4" height="16.0" fill="#8e8a80" opacity="0.36"/><rect x="66.9" y="388.6" width="2.5" height="16.9" fill="#7b7466" opacity="0.30"/><rect x="94.3" y="399.8" width="1.1" height="5.7" fill="#2b3036" opacity="0.48"/><rect x="49.3" y="395.4" width="2.5" height="10.1" fill="#2b3036" opacity="0.26"/><rect x="19.8" y="389.0" width="1.9" height="16.5" fill="#555a5e" opacity="0.45"/><rect x="97.1" y="387.7" width="1.1" height="17.8" fill="#22272c" opacity="0.44"/><rect x="33.7" y="399.7" width="2.0" height="5.8" fill="#22272c" opacity="0.27"/><rect x="43.4" y="386.6" width="2.0" height="18.9" fill="#3a3f45" opacity="0.60"/><rect x="79.8" y="388.9" width="1.8" height="16.6" fill="#7b7466" opacity="0.34"/><rect x="74.5" y="391.5" width="2.7" height="14.0" fill="#2b3036" opacity="0.38"/><rect x="33.4" y="386.3" width="2.7" height="19.2" fill="#3a3f45" opacity="0.40"/><rect x="71.0" y="384.9" width="2.0" height="20.6" fill="#8e8a80" opacity="0.42"/><rect x="79.5" y="398.8" width="2.6" height="6.7" fill="#2b3036" opacity="0.42"/><rect x="61.4" y="384.4" width="2.3" height="21.1" fill="#22272c" opacity="0.50"/><rect x="27.8" y="397.9" width="1.5" height="7.6" fill="#22272c" opacity="0.43"/><rect x="112.4" y="391.8" width="2.5" height="13.7" fill="#555a5e" opacity="0.48"/><rect x="103.4" y="391.0" width="2.1" height="14.5" fill="#555a5e" opacity="0.56"/><rect x="41.5" y="387.0" width="1.5" height="18.5" fill="#3a3f45" opacity="0.31"/><rect x="47.5" y="387.6" width="1.6" height="17.9" fill="#3a3f45" opacity="0.40"/><rect x="85.6" y="397.8" width="2.3" height="7.7" fill="#22272c" opacity="0.54"/><rect x="99.6" y="392.8" width="2.0" height="12.7" fill="#8e8a80" opacity="0.28"/><rect x="113.9" y="385.6" width="2.4" height="19.9" fill="#2b3036" opacity="0.41"/><rect x="32.7" y="388.6" width="1.4" height="16.9" fill="#8e8a80" opacity="0.27"/><rect x="31.4" y="385.5" width="1.5" height="20.0" fill="#555a5e" opacity="0.30"/><rect x="77.1" y="400.8" width="2.2" height="4.7" fill="#555a5e" opacity="0.31"/><rect x="11.9" y="399.9" width="1.3" height="5.6" fill="#2b3036" opacity="0.29"/><rect x="36.7" y="400.8" width="2.6" height="4.7" fill="#7b7466" opacity="0.45"/><rect x="83.1" y="395.5" width="1.0" height="10.0" fill="#7b7466" opacity="0.38"/><rect x="15.6" y="388.1" width="2.2" height="17.4" fill="#7b7466" opacity="0.39"/><rect x="68.3" y="396.6" width="1.2" height="8.9" fill="#8e8a80" opacity="0.40"/><rect x="56.3" y="397.0" width="1.9" height="8.5" fill="#22272c" opacity="0.58"/><rect x="49.1" y="387.9" width="2.4" height="17.6" fill="#555a5e" opacity="0.48"/><rect x="82.5" y="386.8" width="2.7" height="18.7" fill="#2b3036" opacity="0.51"/><rect x="115.4" y="391.8" width="2.2" height="13.7" fill="#2b3036" opacity="0.48"/><rect x="64.3" y="396.2" width="1.1" height="9.3" fill="#8e8a80" opacity="0.45"/><rect x="27.4" y="390.1" width="2.2" height="15.4" fill="#3a3f45" opacity="0.38"/><rect x="110.8" y="399.6" width="1.8" height="5.9" fill="#22272c" opacity="0.30"/><rect x="44.3" y="390.7" width="2.3" height="14.8" fill="#22272c" opacity="0.36"/><rect x="27.9" y="387.4" width="1.9" height="18.1" fill="#8e8a80" opacity="0.27"/><rect x="87.7" y="391.7" width="2.4" height="13.8" fill="#8e8a80" opacity="0.39"/><rect x="18.1" y="400.5" width="1.5" height="5.0" fill="#3a3f45" opacity="0.26"/><rect x="63.8" y="387.7" width="1.4" height="17.8" fill="#555a5e" opacity="0.56"/><rect x="113.6" y="386.9" width="1.8" height="18.6" fill="#2b3036" opacity="0.37"/><rect x="102.5" y="396.6" width="1.2" height="8.9" fill="#2b3036" opacity="0.49"/><rect x="70.6" y="399.5" width="2.6" height="6.0" fill="#8e8a80" opacity="0.32"/><rect x="53.9" y="386.8" width="2.3" height="18.7" fill="#8e8a80" opacity="0.29"/><rect x="75.5" y="387.1" width="2.5" height="18.4" fill="#22272c" opacity="0.43"/><rect x="71.0" y="397.0" width="1.4" height="8.5" fill="#555a5e" opacity="0.26"/><rect x="97.6" y="384.4" width="2.6" height="21.1" fill="#7b7466" opacity="0.36"/><rect x="109.2" y="392.5" width="1.6" height="13.0" fill="#22272c" opacity="0.49"/><rect x="40.6" y="392.8" width="2.5" height="12.7" fill="#22272c" opacity="0.32"/><rect x="78.4" y="387.9" width="1.2" height="17.6" fill="#3a3f45" opacity="0.42"/><rect x="66.0" y="398.0" width="1.8" height="7.5" fill="#22272c" opacity="0.32"/><rect x="98.6" y="384.5" width="2.7" height="21.0" fill="#2b3036" opacity="0.45"/><rect x="115.2" y="399.1" width="2.6" height="6.4" fill="#2b3036" opacity="0.47"/>
<ellipse cx="60" cy="400" rx="22" ry="4" fill="#a8a69c" opacity=".5" filter="url(#tbl)"/><ellipse cx="104" cy="392" rx="8" ry="7" fill="#9a9a90" opacity=".5" filter="url(#tbl)"/>
<g font-family="'Liberation Serif','Noto Serif CJK SC',serif" font-weight="900" font-size="3.1" text-anchor="middle" fill="#fff" stroke="#fff" stroke-width=".08"><text x="64.300" y="382.100">对比强烈是顺畅的关键</text><text x="64.700" y="386.200">好的排版将会自带引导一众元素间的层次关系</text></g>
<path d="M33.100 407.500c8 14 56 14 64 0" fill="none" stroke="#ececf0" stroke-width="2.200"/>
<circle cx="33.1" cy="405.800" r="4.600" fill="#fff" opacity=".9"/><circle cx="33.1" cy="405.800" r="4" fill="#1560ee"/><circle cx="54.4" cy="405.800" r="4.600" fill="#fff" opacity=".9"/><circle cx="54.4" cy="405.800" r="4" fill="#1560ee"/><circle cx="75.8" cy="405.800" r="4.600" fill="#fff" opacity=".9"/><circle cx="75.8" cy="405.800" r="4" fill="#1560ee"/><circle cx="97.1" cy="405.800" r="4.600" fill="#fff" opacity=".9"/><circle cx="97.1" cy="405.800" r="4" fill="#1560ee"/>
<path d="M31.600 404.300a2 2 0 1 0 3 1.500h-1.700z" fill="#fff"/><path d="M52.600 407.400h3.600M53 406.600l1.200-1.400.8.700 1.200-1.500" stroke="#fff" stroke-width=".5" fill="none"/><path d="M75.800 403.800a1.500 1.500 0 0 1 .8 2.700v.7h-1.600v-.7a1.500 1.500 0 0 1 .8-2.700z" fill="#fff"/><path d="M97.100 403.800v4M95.300 404.800l3.600 2M98.900 404.800l-3.600 2" stroke="#fff" stroke-width=".45"/>
<circle cx="64.700" cy="415.700" r="5.200" fill="#fff" stroke="#2b6cf0" stroke-width=".6"/><rect x="62.700" y="415.400" width="4" height=".45" fill="#777"/>
<path d="M48.200 415.200l1-.0-.5-1.200zM80.700 415.200l1 0-.5-1.200z" fill="#f2553c"/>
<g font-family="'Liberation Sans',sans-serif" font-size="1.5" text-anchor="middle" font-weight="400"><text x="33.1" y="399.500" fill="#f0f0f0" font-size="1.8">Initiate</text><text x="54.4" y="399.500" fill="#f0f0f0" font-size="1.8">Proposal</text><text x="75.8" y="399.500" fill="#f0f0f0" font-size="1.8">Evolve</text><text x="97.1" y="399.500" fill="#f0f0f0" font-size="1.8">Deliver</text><text x="22" y="421.600" fill="#3a3a3a" font-size="2.1">Introduction</text><text x="47.6" y="421.600" fill="#3a3a3a" font-size="2.1">Agenda</text><text x="82" y="421.600" fill="#3a3a3a" font-size="2.1">Meeting</text><text x="107.1" y="421.600" fill="#3a3a3a" font-size="2.1">Conference</text></g>
<path d="M34.600 418.200v5M94.800 418.200v5" stroke="#ddd" stroke-width=".35"/>
</svg>

<div id="vscroll" class="abs"></div>
<svg class="abs" style="left:126px;top:76px" width="8" height="347" viewBox="126 76 8 347"><rect x="127.700" y="226" width="3.400" height="57.600" rx=".6" fill="#c9c9d6"/><path d="M129.400 253.200v3" stroke="#b4b4c4" stroke-width=".4"/><path d="M127.900 81.800l1.500-1.900 1.500 1.900z" fill="#f4f4f8"/><path d="M127.900 418.800l1.500 1.900 1.500-1.900z" fill="#f4f4f8"/></svg>

<div class="abs" style="left:53.7px;top:425.3px;width:22px;height:8px;border:0.6px solid #d8a48c;border-radius:0.8px;background:#d3d2db"></div>
<svg class="abs" style="left:60px;top:426px" width="10" height="7" viewBox="60 426 10 7"><path d="M62.400 429.300h4.600M64.700 427v4.600" stroke="#c9662f" stroke-width=".7"/></svg>
<!-- ===== main slide ===== -->
<div id="slide" class="abs"></div>
<svg class="abs" style="left:141px;top:68px;overflow:visible" width="628" height="353.5" viewBox="0 0 628 353.5">
<defs>
<filter id="sh" x="-30%" y="-30%" width="160%" height="160%"><feGaussianBlur stdDeviation="3"/></filter>
</defs>
<!-- title -->
<text x="313.7" y="56.8" text-anchor="middle" font-family="'Liberation Serif','Noto Serif CJK SC',serif" font-weight="900" font-size="13.05" fill="#0c0c0c"><tspan font-size="14.8">WPS</tspan>演示中的图层面板——选择窗格</text>
<text x="313.5" y="71" text-anchor="middle" font-family="'Liberation Serif','Noto Serif CJK SC',serif" font-weight="900" font-size="13.05" fill="#0c0c0c">打开选择窗格调整下面元素的图层关系</text>
<rect x="281.8" y="80.4" width="64.2" height="2.9" rx="1.45" fill="#ee4a2e"/>
<!-- circles -->
<g>
<circle cx="194.6" cy="206.8" r="35.5" fill="#000" opacity=".28" filter="url(#sh)"/>
<circle cx="191.8" cy="203.5" r="35.5" fill="#0a5cf2"/>
<circle cx="231.4" cy="207" r="44.8" fill="#000" opacity=".28" filter="url(#sh)"/>
<circle cx="228.3" cy="203.5" r="44.8" fill="#f44a31"/>
<circle cx="268.4" cy="207.2" r="53.4" fill="#000" opacity=".28" filter="url(#sh)"/>
<circle cx="265" cy="203.5" r="53.4" fill="#353849"/>
<circle cx="313" cy="207.4" r="61.4" fill="#000" opacity=".28" filter="url(#sh)"/>
<circle cx="309.5" cy="203.4" r="61.4" fill="#cdcdcd"/>
<circle cx="355.2" cy="207.6" r="70.5" fill="#000" opacity=".28" filter="url(#sh)"/>
<circle cx="351.3" cy="203.4" r="70.5" fill="#989898"/>
<circle cx="394.2" cy="207.8" r="80.3" fill="#000" opacity=".3" filter="url(#sh)"/>
<circle cx="389.9" cy="203.3" r="80.3" fill="#5f5f5f"/>
</g>
<!-- selection frame -->
<rect x="309.6" y="123" width="160.6" height="160.6" fill="none" stroke="#b8b8b8" stroke-width="0.6"/>
<g fill="#fff" stroke="#8c8c8c" stroke-width="0.5">
<circle cx="309.6" cy="123" r="1.9"/><circle cx="389.9" cy="123" r="1.9"/><circle cx="470.2" cy="123" r="1.9"/>
<circle cx="309.6" cy="203.3" r="1.9"/><circle cx="470.2" cy="203.3" r="1.9"/>
<circle cx="309.6" cy="283.6" r="1.9"/><circle cx="389.9" cy="283.6" r="1.9"/><circle cx="470.2" cy="283.6" r="1.9"/>
</g>
<!-- rotate handle -->
<path d="M387.6 115.4a2.4 2.4 0 1 1 2.4 2.3" fill="none" stroke="#f0a030" stroke-width="1"/>
<path d="M386.2 115.6l1.5-1.9 1.4 2z" fill="#f0a030"/>
<!-- footer -->
<g font-family="'Liberation Serif','Noto Serif CJK SC',serif" font-size="6.3" fill="#cfcfcf">
<text x="33.5" y="327.6">跟我比邻学PPT（WPS篇）</text>
<text x="303.5" y="327.6">Page 15</text>
<text x="567" y="327.6">4/14/2021</text>
</g>
</svg>
<!-- red annotation around selected circle -->
<div class="redbox" style="left:445.6px;top:184.8px;width:171.2px;height:173px;border-width:2px;border-color:#dd5050"></div>
<!-- floating quick toolbar -->
<svg class="abs" style="left:626px;top:190px;overflow:visible" width="16" height="80" viewBox="626 190 16 80">
<defs><filter id="bs" x="-30%" y="-30%" width="160%" height="160%"><feGaussianBlur stdDeviation="0.7"/></filter></defs>
<circle cx="633.4" cy="195" r="2.5" fill="#f8f8f8" stroke="#b9b9b9" stroke-width="0.5"/>
<path d="M632.2 195h2.4" stroke="#999" stroke-width="0.6"/>
<g>
<rect x="628.9" y="201.9" width="9.3" height="9.3" fill="#000" opacity=".3" filter="url(#bs)"/>
<rect x="628.9" y="216.2" width="9.3" height="9.3" fill="#000" opacity=".3" filter="url(#bs)"/>
<rect x="628.9" y="229.9" width="9.3" height="9.3" fill="#000" opacity=".3" filter="url(#bs)"/>
<rect x="628.9" y="243.9" width="9.3" height="9.3" fill="#000" opacity=".3" filter="url(#bs)"/>
<rect x="628.9" y="257.6" width="9.3" height="9.3" fill="#000" opacity=".3" filter="url(#bs)"/>
</g>
<g fill="#fff">
<rect x="628.9" y="201.6" width="9.3" height="9.3"/><rect x="628.9" y="215.9" width="9.3" height="9.3"/><rect x="628.9" y="229.6" width="9.3" height="9.3"/><rect x="628.9" y="243.6" width="9.3" height="9.3"/><rect x="628.9" y="257.3" width="9.3" height="9.3"/>
</g>
<!-- icons -->
<path d="M632.3 205.2h2.5l-.3 3h-1.9z" fill="#7d86c8"/><path d="M633.5 203.9v1.2" stroke="#4a5ab8" stroke-width="0.8"/>
<path d="M631.6 218.4h3.2v4.4h-3.2z" fill="none" stroke="#9aa3d6" stroke-width="0.5"/><path d="M632.6 221.6l3.4-3.4" stroke="#3f51b5" stroke-width="0.9"/>
<path d="M631.4 237h4.6" stroke="#e06a5a" stroke-width="0.8"/><path d="M632 235.6l1.6-2.6 2 1.4-1.2 1.8z" fill="#7d86c8"/>
<path d="M631.4 251h4.6" stroke="#e06a5a" stroke-width="0.8"/><path d="M632 249.4l3.2-3.2" stroke="#3f51b5" stroke-width="0.9"/><path d="M631.4 245.8h4.4v4.2h-4.4z" fill="none" stroke="#aab2dd" stroke-width="0.4"/>
<path d="M631.2 260.2h4.8v3.8h-4.8z" fill="none" stroke="#7a7f99" stroke-width="0.5" stroke-dasharray="0.9 0.6"/><path d="M632.2 262.1h2.8M633.6 260.9v2.4" stroke="#555c80" stroke-width="0.6"/>
</svg>


<!-- ===== right side ===== -->
<div id="rscroll" class="abs"></div>
<div id="rside" class="abs"></div>
<svg class="abs" style="left:774px;top:62px" width="16" height="374" viewBox="774 62 16 374" fill="none" stroke-linecap="round" stroke-linejoin="round">
<rect x="781.4" y="64.6" width="8.6" height="7.8" fill="#f6f6f9"/>
<path d="M781.4 72.6h8.600" stroke="#dcdce4" stroke-width=".5"/>
<path d="M781.4 419.600h8.600" stroke="#e2e2ea" stroke-width=".4"/>
<rect x="777.200" y="67.600" width="1.800" height=".9" fill="#f4f4f8"/>
<path d="M777 402.200l1.200 1.500 1.200-1.500z" fill="#f6f6fa"/>
<path d="M777.500 409.600h1.300v1.300h-1.300zM777.500 416h1.300v1.300h-1.300z" fill="#9090a4"/>
<g stroke="#49506e" stroke-width=".6">
<path d="M786 79.400h4M786 82h4M787.600 78.600v1.600M789 81.200v1.600"/>
<path d="M786.200 94.600c.6-2 2.400-2.600 3.800-1.800M786 92.400l1.200 1.200"/>
<path d="M786.200 104.200h3.800M786.200 104.200v3.400h3.800M788.600 107.600l1.200-.9"/>
<path d="M789.800 115.400a2.200 2.200 0 1 0 0 3.600M788 117.200l1.400-1"/>
</g>
<path d="M786.400 428.800v.2M788.600 428.800v.2" stroke="#555" stroke-width=".8"/>
</svg>

<!-- ===== status bar ===== -->
<div id="status" class="abs"></div>
<div class="abs" style="left:134.4px;top:425.8px;width:647px;height:0.5px;background:#cacad7"></div>
<div class="abs" style="left:134px;top:64px;width:0.5px;height:370.6px;background:#cbcbd8"></div>
<span class="t" style="left:138.3px;top:429.85px;font-size:4.85px;color:#3a3a44">单击此处添加备注</span>
<span class="t" style="left:44.3px;top:438.7px;font-size:4.5px;color:#555">幻灯片 15 / 16</span>
<span class="t" style="left:151px;top:438.7px;font-size:4.5px;color:#555">Office 主题</span>
<span class="t" style="left:446px;top:438.9px;font-size:4.4px;color:#666">缺失字体</span>
<span class="t" style="left:626.6px;top:438.9px;font-size:4.2px;color:#666">备注</span>
<span class="t" style="left:714.5px;top:438.7px;font-size:4.5px;color:#555">116%</span>
<svg class="abs" style="left:0;top:434px" width="790" height="6" viewBox="0 434 790 6" fill="none">
<path d="M124 436.500v4M644 436.500v4M685.500 436.500v4" stroke="#c4c4cc" stroke-width=".4"/>
<path d="M440 438.200l1.600-1.400 1.600 1.400v2h-3.200z" stroke="#777" stroke-width=".5"/>
<path d="M610.500 437.600h3.600M610.500 438.800h3.600M610.500 440h3.600" stroke="#666" stroke-width=".5"/><path d="M615.600 438.600h1.400l-.7.800z" fill="#666"/>
<path d="M623 437.200h2.600v3h-2.600z" stroke="#666" stroke-width=".5"/>
<rect x="647.600" y="436.200" width="9" height="4" fill="#d3d6e4" stroke="#b4b9cf" stroke-width=".4"/>
<rect x="649.800" y="437.400" width="4.600" height="3" stroke="#49506e" stroke-width=".6"/>
<path d="M662.400 437.600h2v2h-2zM665.400 437.600h2v2h-2z" stroke="#7a88b8" stroke-width=".5"/><path d="M663 438.600h1" stroke="#e6a23c" stroke-width=".8"/>
<path d="M674 437.800h2.600v2.500h-2.600zM676.600 437.800h2.600v2.500h-2.600z" stroke="#666" stroke-width=".5"/>
<path d="M690.400 435.200l11 4.800h-11z" fill="#fdfdfd"/>
<path d="M703.800 438.400h1.400l-.7.800z" fill="#666"/>
<path d="M709.600 438.800h1.600" stroke="#666" stroke-width=".5"/>
<path d="M711.800 438.400l1.600-1.200M711.800 437.200h1.600v1.200" stroke="#555" stroke-width=".4"/>
<rect x="738" y="439" width="27" height="1" fill="#f0b596"/>
<rect x="765" y="439.2" width="25" height=".8" fill="#c9c9cf"/>
<circle cx="765.200" cy="440.300" r="1.700" fill="#fff" stroke="#999" stroke-width=".4"/>
</svg>

<!-- ===== dropdown + annotations ===== -->
<div class="abs" style="left:337.3px;top:31.7px;width:58.8px;height:29.2px;background:#fff;border:0.4px solid #d8d8de;box-shadow:0 0.6px 1.6px rgba(60,60,90,.28)"></div>
<span class="t" style="left:349.2px;top:35.10px;font-size:4.4px;color:#444;">全选(A)</span>
<span class="t" style="left:378.3px;top:34.95px;font-size:4.5px;color:#555;">Ctrl+A</span>
<span class="t" style="left:349.2px;top:45.00px;font-size:4.4px;color:#4c4c4c;">选择对象(O)</span>
<span class="t" style="left:349.2px;top:54.30px;font-size:4.4px;color:#444;">选择窗格(J)</span>
<svg class="abs" style="left:337px;top:31px" width="14" height="22" viewBox="337 31 14 22" fill="none" stroke-linecap="round" stroke-linejoin="round"><rect x="341.400" y="35" width="3.600" height="3.600" stroke="#6a7da8" stroke-width=".5" stroke-dasharray=".9 .5"/><path d="M343.600 36.800l1.800 2" stroke="#444" stroke-width=".5"/><path d="M340.800 47l1.400-2 2.400-.4 1.400 1.600-.6 2-2.600.6z" stroke="#666" stroke-width=".5"/><path d="M343.400 46.800l2 2.200" stroke="#d66" stroke-width=".6"/></svg>
<svg class="abs" style="left:345px;top:24px" width="8" height="9" viewBox="345 24 8 9"><path d="M347.200 26v4l1-.8.700 1.400.700-.3-.7-1.400h1.200z" fill="#fff" stroke="#c9a090" stroke-width=".25"/></svg>
<div class="redbox" style="left:332.3px;top:20.1px;width:19.8px;height:13.2px"></div>
<div class="redbox" style="left:334.5px;top:50.7px;width:43.2px;height:14.300px"></div>
<div class="redbox" style="left:441.200px;top:2.800px;width:23.400px;height:19.900px"></div>

</body>
</html>
